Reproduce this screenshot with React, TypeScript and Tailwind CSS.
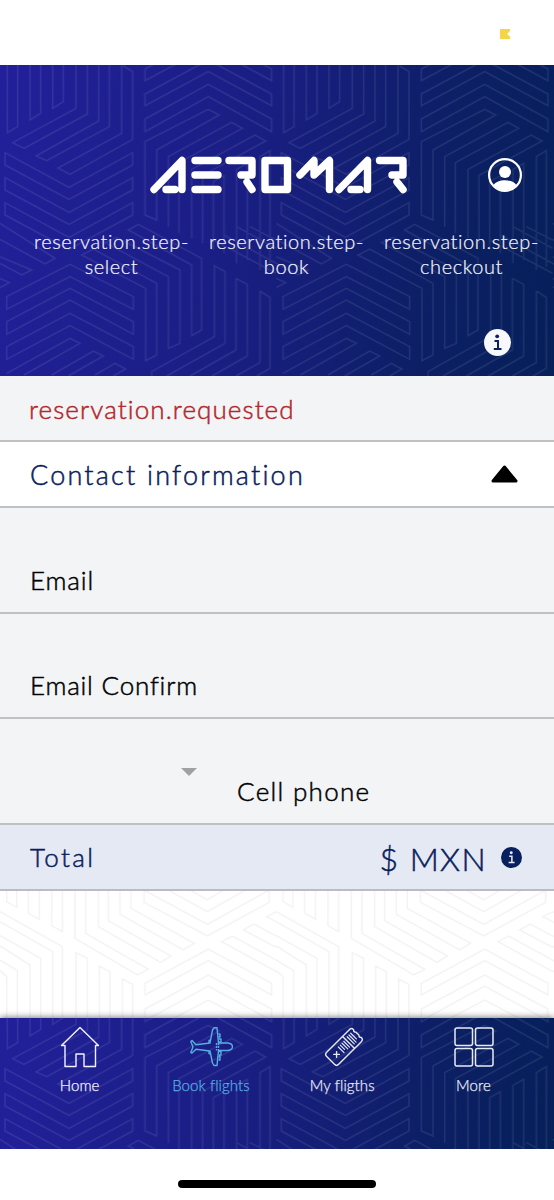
import type { ReactNode } from "react";

/** Line work of the blue panels; one tile is 829 units wide, three units to a pixel. */
const BLUE_TILE = [
  "M22 -10V218L53 200V-10M90 -10V180L122 160V-10M158 -10V145L190 125V-10",
  "M228 -10V145L38 248L72 265L262 162V-10M296 -10V183L108 288L140 302L328 200V-10",
  "M365 -10V220L174 324L210 343L398 238V35L370 18",
  "M15 278L207 382L398 278V315L207 418L15 315ZM15 353L207 457L398 353V390L207 493L15 390Z",
  "M15 428V465L207 568L398 465V428L207 532Z",
  "M435 27L480 3M770 3L815 27V62L625 -40L435 62V27M435 102L625 0L815 102V137L625 35L435 137ZM435 177L625 73L815 177V215L625 110L435 215Z",
  "M435 245L625 148L658 165L470 270V480L435 465ZM505 500V290L695 187L727 205L537 308V520M575 535V328L765 225L797 243L608 346V550",
  "M640 570V365L672 347V580M710 610V328L742 310V600M780 630V290L810 272V620",
  "M0 490L165 595L135 612L0 538M0 590L95 630L65 645L0 610M0 655L28 668L0 683",
  "M20 710L210 613L400 710V748L210 650L20 748ZM20 785L210 685L400 785V823L210 720L20 823ZM20 860L210 760L400 860V898L210 797L20 898Z",
  "M20 940L210 835L240 850L72 945M155 945L280 873L310 888L205 948M285 945L345 910L377 927L340 948",
  "M245 585L437 685V902L470 885V670L280 567ZM315 548L505 650V865L540 850V630L350 532ZM385 510L575 615V827L605 810V595L415 493Z",
  "M455 948V935L643 830V617L675 635V850L500 948M708 655L742 673V888L636 948M708 655V870L570 948M780 693L810 712V925L770 948M780 693V908L708 948",
  "M640 500V540L829 640M672 500V525L829 610M710 500L829 565M750 500L829 540",
].join("");

/** Line work of the white area, same unit and tile width. */
const WHITE_TILE = [
  "M20 0V65L50 82V0M85 0V100L118 118V0M155 0V137L187 155V0",
  "M225 0V175L412 285L445 268L257 160V0M295 0V140L482 247L513 228L325 122V0M360 0V103L550 210L583 190L393 85V0",
  "M432 30V67L622 168L808 67V30L622 133ZM432 -10L622 95L808 -10M500 -10L622 60L740 -10",
  "M0 95L187 200V450M0 125L158 215V450M0 167L122 235V450M0 198L90 255V450M0 240L52 272V450M0 272L20 290V450",
  "M228 450V218L262 235V450M298 450V258L330 275V450M367 450V297L398 313V450",
  "M435 310L625 207L815 310V345L625 242L435 345ZM435 387L625 285L815 387V422L625 318L435 422ZM435 460L625 360L815 460",
  "M829 275L665 185L697 168L829 240M829 202L730 150L762 132L829 168M829 125L800 110L829 95",
].join("");

function Lines({ id, d, dy, color }: { id: string; d: string; dy: number; color: string }) {
  return (
    <svg className="pointer-events-none absolute inset-0 h-full w-full" aria-hidden="true">
      <defs>
        <pattern id={id} width="276.33" height="400" y={dy} patternUnits="userSpaceOnUse">
          <path d={d} transform="scale(.33333)" fill="none" stroke={color} strokeWidth="4.5" />
        </pattern>
      </defs>
      <rect width="100%" height="100%" fill={`url(#${id})`} />
    </svg>
  );
}

function Logo() {
  return (
    <svg width="258" height="38" viewBox="0 0 258 38" fill="none" stroke="#fff" strokeWidth="7.4" strokeLinecap="round" strokeLinejoin="round" aria-label="Aeromar">
      <path d="M4 33.5L32 4.5V33.5M16 33.5H25" />
      <path d="M45 4.5H68M45 19H68M45 33.5H68" />
      <path d="M79 4.5H102V19H91M97 26L102 33.5" />
      <path d="M115 4.5H137.500V33.500H115Z" />
      <path d="M150 19L164 4.500V19L179.500 4.500V33.500" />
      <path d="M189 33.500L217.500 4.500V33.500M201 33.500H210" />
      <path d="M229.500 4.500H253V19H242M247 26L253 33.500" />
    </svg>
  );
}

function Profile() {
  return (
    <svg width="34" height="34" viewBox="0 0 34 34" fill="none">
      <circle cx="17" cy="17" r="15.900" stroke="#fff" strokeWidth="2.200" />
      <circle cx="17" cy="14" r="6" fill="#fff" />
      <path d="M5.500 27.300C9 20.700 25 20.700 28.500 27.300A16 16 0 0 1 5.500 27.300Z" fill="#fff" />
    </svg>
  );
}

function Info({ size, disc, mark }: { size: number; disc: string; mark: string }) {
  return (
    <svg width={size} height={size} viewBox="0 0 27 27">
      <circle cx="13.500" cy="13.500" r="13.500" fill={disc} />
      <circle cx="13.200" cy="7.300" r="1.900" fill={mark} />
      <path d="M10.500 12H14V20M9.800 20H17.500" fill="none" stroke={mark} strokeWidth="2" />
    </svg>
  );
}

function Step({ children }: { children: ReactNode }) {
  return <div className="w-[175px] text-center text-[20px] leading-[25px] tracking-[0.6px] text-[#f4f5fc] [-webkit-text-stroke:0.2px]">{children}</div>;
}

function Tab({ label, tone, icon }: { label: ReactNode; tone: string; icon: ReactNode }) {
  return (
    <div className={`flex w-[131.3px] flex-col items-center ${tone}`}>
      <div className="flex h-[42px] items-center">{icon}</div>
      <div className="mt-[7px] text-[15px] leading-[20px] tracking-[0.1px] whitespace-nowrap [-webkit-text-stroke:0.25px]">{label}</div>
    </div>
  );
}

const BLUE = "relative bg-[linear-gradient(100deg,#22209a_0%,#191e82_45%,#0c1f64_78%,#06205a_100%)]";

export default function App() {
  return (
    <div className="flex h-[1200px] w-[554px] flex-col overflow-hidden bg-white font-['Century_Gothic','Lato',sans-serif] font-light [-webkit-text-stroke:0.5px]">
      <div className="flex h-[65px] shrink-0 justify-end pt-[29px] pr-[44px]">
        <svg width="10" height="10" viewBox="0 0 10 10"><path d="M0 0H10V2L7 5L10 7.500V10H0Z" fill="#f5d548" /></svg>
      </div>

      <header className={`${BLUE} h-[311px] shrink-0`}>
        <Lines id="header-lines" d={BLUE_TILE} dy={-5} color="#ffffff16" />
        <div className="relative flex h-full flex-col">
          <div className="flex h-[164px] pt-[91px] pl-[150px]">
            <Logo />
            <div className="ml-[80px] pt-[2px]"><Profile /></div>
          </div>
          <div className="flex pl-[24px]">
            <Step>reservation.step-<br />select</Step>
            <Step>reservation.step-<br />book</Step>
            <Step>reservation.step-<br />checkout</Step>
          </div>
          <div className="flex justify-end pt-[50px] pr-[43px]"><Info size={27} disc="#f7f8fc" mark="#122060" /></div>
        </div>
      </header>

      <div className="flex h-[66px] shrink-0 items-center border-b-2 border-[#c0c1c3] bg-[#f3f4f6] pt-[2px] pl-[29px] text-[26px] tracking-[1.1px] text-[#b1282d]">
        <span>reservation.requested</span>
      </div>
      <div className="flex h-[66px] shrink-0 items-center justify-between border-b-2 border-[#c0c1c3] bg-white pr-[36px] pl-[30px] text-[27px] tracking-[2.2px] text-[#08205d]">
        <span className="pt-[2px]">Contact information</span>
        <svg width="27" height="18" viewBox="0 0 27 18"><path d="M13.500 2L25 16H2Z" fill="#000" stroke="#000" strokeWidth="3" strokeLinejoin="round" /></svg>
      </div>
      <div className="h-[106px] shrink-0 border-b-2 border-[#c0c1c3] bg-[#f3f4f6] pt-[56px] pl-[30px] text-[26px] leading-[32px] text-black">
        <span className="tracking-[0.9px]">Email</span>
      </div>
      <div className="h-[105px] shrink-0 border-b-2 border-[#c0c1c3] bg-[#f3f4f6] pt-[55px] pl-[30px] text-[26px] leading-[32px] text-black">
        <span className="tracking-[0.8px]">Email Confirm</span>
      </div>
      <div className="flex h-[106px] shrink-0 border-b-2 border-[#c0c1c3] bg-[#f3f4f6] pl-[181px] text-[26px] leading-[32px] text-black">
        <svg className="mt-[49px]" width="16" height="8" viewBox="0 0 16 8"><path d="M0 0H16L8 8Z" fill="#a0a1a4" /></svg>
        <span className="mt-[56px] ml-[40px] tracking-[1.3px]">Cell phone</span>
      </div>
      <div className="flex h-[66px] shrink-0 items-center border-b-2 border-[#b9bcc6] bg-[#e5e9f3] pr-[32px] pl-[30px] text-[#08205d]">
        <span className="pt-[1px] text-[26px] tracking-[2.4px]">Total</span>
        <span className="ml-auto pt-[3px] text-[32px] tracking-[1.4px]">$ MXN</span>
        <span className="ml-[14px]"><Info size={21} disc="#08205d" mark="#e5e9f3" /></span>
      </div>

      <div className="relative h-[127px] shrink-0 bg-white">
        <Lines id="body-lines" d={WHITE_TILE} dy={-11} color="#f3f3f4" />
      </div>

      <nav className={`${BLUE} h-[131px] shrink-0 shadow-[0_-1px_6px_rgba(0,0,0,0.5)]`}>
        <Lines id="nav-lines" d={BLUE_TILE} dy={-42} color="#ffffff16" />
        <div className="relative flex pt-[8px] pl-[14px]">
          <Tab
            label={<span>Home</span>}
            tone="text-[#f2f3fc]"
            icon={
              <svg width="40" height="42" viewBox="0 0 40 42" fill="none" stroke="currentColor" strokeWidth="1.400" strokeLinejoin="round">
                <path d="M20 1.500L38.500 19.500H35.500V40.500H24V28H16V40.500H5V19.500H1.500Z" />
              </svg>
            }
          />
          <Tab
            label={<span>Book flights</span>}
            tone="text-[#56aee0]"
            icon={
              <svg width="44" height="42" viewBox="0 0 44 42" fill="none" stroke="currentColor" strokeWidth="1.400" strokeLinejoin="round">
                <path d="M21 17L23.500 4L25 1.800H28L29.500 17H39C45 18 45 23.500 39 24.500H29.500L28 39.500H25L23.500 37L21 25L7 23.300L3 27L1.800 26.500L4 21L1.800 15.500L3 14.500L7 18.700Z" />
                <path d="M29.500 8H31V11H29.500M30 13H32V16H30M29.500 25.500H32V29H30M29.500 30.500H31V34H29.500M21.500 14L20 14.500V17M21.500 28L20 27.500V25" />
                <path d="M27.500 17V24.500M29.500 17V24.500" strokeDasharray="2 1" />
              </svg>
            }
          />
          <Tab
            label={<span>My fligths</span>}
            tone="text-[#e6eaf8]"
            icon={
              <svg className="ml-[4px]" width="40" height="40" viewBox="0 0 40 40" fill="none" stroke="currentColor" strokeWidth="1.400" strokeLinecap="round">
                <g transform="translate(20 20) rotate(-45)">
                  <path d="M-16 -8.500H16A3 3 0 0 1 19 -5.500C18 -4.500 18 -3 19 -2V2C18 3 18 4.500 19 5.500A3 3 0 0 1 16 8.500H-16A3 3 0 0 1 -19 5.500V-5.500A3 3 0 0 1 -16 -8.500ZM6.500 -8.500V8.500" />
                  <path d="M-4 -4V4M-1.300 -4V2M1.300 -4V4M3.800 -4V4M9.500 -5V5M12 -5V5M14.500 -5V3" strokeWidth="1.200" />
                  <path d="M-12.500 -2L-8.500 2M-8.500 -2L-12.500 2" />
                </g>
              </svg>
            }
          />
          <Tab
            label={<span>More</span>}
            tone="text-[#e6ebf8]"
            icon={
              <svg width="40" height="40" viewBox="0 0 40 40" fill="none" stroke="currentColor" strokeWidth="1.500">
                <rect x="1" y="1" width="17.500" height="17.500" rx="2" />
                <rect x="21.500" y="1" width="17.500" height="17.500" rx="2" />
                <rect x="1" y="21.500" width="17.500" height="17.500" rx="2" />
                <rect x="21.500" y="21.500" width="17.500" height="17.500" rx="2" />
              </svg>
            }
          />
        </div>
      </nav>

      <div className="relative flex grow justify-center bg-white pt-[31px]">
        <div className="h-[8px] w-[198px] rounded-full bg-black" />
      </div>
    </div>
  );
}
